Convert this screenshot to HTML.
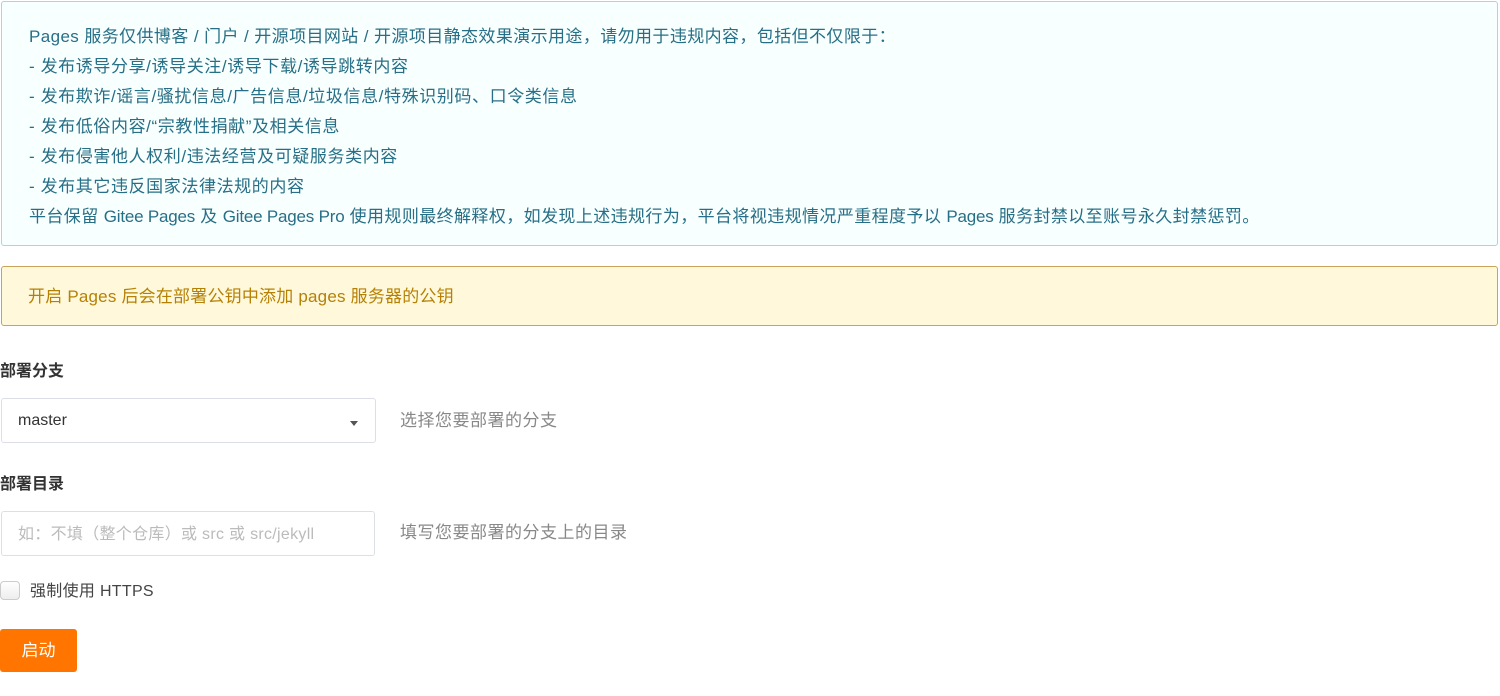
<!DOCTYPE html>
<html><head><meta charset="utf-8"><style>
body{margin:0;width:1500px;height:696px;background:#fff;font-family:"Liberation Sans","Noto Sans CJK SC",sans-serif;font-size:16px;color:#333;overflow:hidden;position:relative}
.abs{position:absolute}
.info{left:1px;top:1px;width:1497px;height:245px;background:#f8ffff;border:1px solid #a9d5de;border-radius:3px;box-sizing:border-box;color:#276f86;padding:20px 0 0 27px;line-height:30px;font-size:17px;letter-spacing:0.4px;white-space:nowrap}
.c{letter-spacing:0.6px}
.l{letter-spacing:-0.2px}
.warn{left:1px;top:266px;width:1497px;height:60px;background:#fff8db;border:1px solid #c9a35a;border-radius:3px;box-sizing:border-box;color:#b58105;padding:0 0 0 26px;line-height:60px;font-size:17px;letter-spacing:0.2px}
.lbl{font-weight:bold;color:#333;left:0}
.box{border:1px solid #dcdfe6;border-radius:3px;box-sizing:border-box;background:#fff}
.help{color:#888;left:400px;font-size:17px;letter-spacing:0.5px}
</style></head><body>
<div class="abs info">Pages 服务仅供博客 / 门户 / 开源项目网站 / 开源项目静态效果演示用途，请勿用于违规内容，包括但不仅限于：<br><span class="c">- 发布诱导分享/诱导关注/诱导下载/诱导跳转内容</span><br><span class="c">- 发布欺诈/谣言/骚扰信息/广告信息/垃圾信息/特殊识别码、口令类信息</span><br><span class="c">- 发布低俗内容/“宗教性捐献”及相关信息</span><br><span class="c">- 发布侵害他人权利/违法经营及可疑服务类内容</span><br><span class="c">- 发布其它违反国家法律法规的内容</span><br>平台保留 <span class="l">Gitee Pages</span> 及 <span class="l">Gitee Pages Pro</span> 使用规则最终解释权，如发现上述违规行为，平台将视违规情况严重程度予以 <span class="l">Pages</span> 服务封禁以至账号永久封禁惩罚。</div>
<div class="abs warn">开启 Pages 后会在部署公钥中添加 pages 服务器的公钥</div>
<div class="abs lbl" style="top:357px">部署分支</div>
<div class="abs box" style="left:1px;top:398px;width:375px;height:45px;padding-left:16px;line-height:43px">master<span class="abs" style="right:17px;top:22px;width:0;height:0;border-left:4px solid transparent;border-right:4px solid transparent;border-top:5px solid #555"></span></div>
<div class="abs help" style="top:406px">选择您要部署的分支</div>
<div class="abs lbl" style="top:470px">部署目录</div>
<div class="abs box" style="left:1px;top:511px;width:374px;height:45px;padding-left:16px;line-height:45px;color:#bbb;font-size:16px;letter-spacing:0.3px">如：不填（整个仓库）或 src 或 src/jekyll</div>
<div class="abs help" style="top:518px">填写您要部署的分支上的目录</div>
<div class="abs box" style="left:0;top:581px;width:20px;height:19px;border-color:#ccc;border-radius:4px;background:linear-gradient(#fff,#eee)"></div>
<div class="abs" style="left:30px;top:577px;color:#444;letter-spacing:0.3px">强制使用 HTTPS</div>
<div class="abs" style="left:0;top:629px;width:77px;height:43px;background:#ff7500;border-radius:3px;color:#fff;font-size:17px;text-align:center;line-height:43px">启动</div>
</body></html>
